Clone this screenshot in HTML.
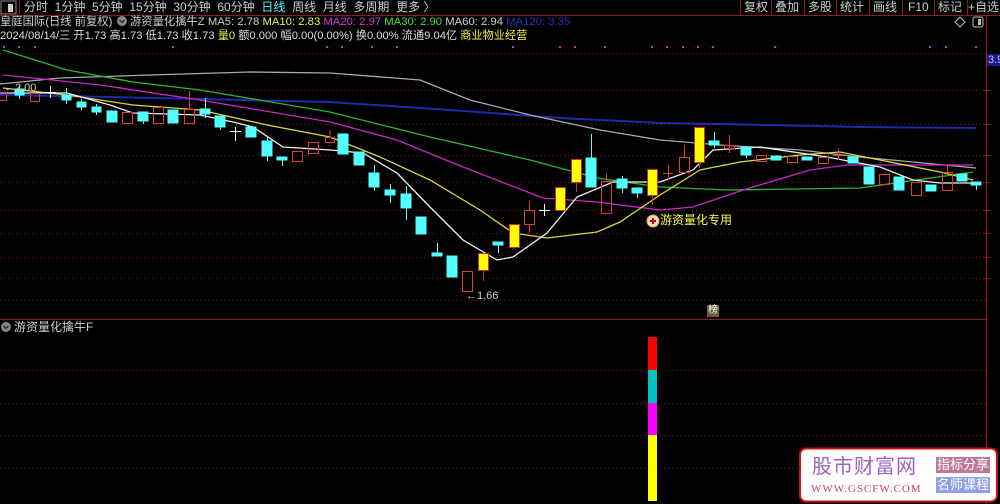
<!DOCTYPE html>
<html><head><meta charset="utf-8"><style>
body{margin:0;background:#000;width:1000px;height:504px;overflow:hidden;position:relative;font-family:"Liberation Sans","Noto Sans CJK SC",sans-serif;}
.t{position:absolute;white-space:nowrap;font-size:12px;line-height:14px;}
</style></head><body>
<svg width="1000" height="504" style="position:absolute;left:0;top:0" xmlns="http://www.w3.org/2000/svg">
<line x1="0" y1="15.5" x2="1000" y2="15.5" stroke="#8a1c1c"/>
<rect x="1" y="1" width="15" height="13" fill="none" stroke="#888"/>
<rect x="8" y="4" width="5" height="8" fill="#ccc"/>
<line x1="19.5" y1="0" x2="19.5" y2="15" stroke="#8a1c1c"/>
<g stroke="#8a1c1c"><line x1="740.5" y1="0" x2="740.5" y2="15"/><line x1="771.5" y1="0" x2="771.5" y2="15"/><line x1="804.5" y1="0" x2="804.5" y2="15"/><line x1="836.5" y1="0" x2="836.5" y2="15"/><line x1="869.5" y1="0" x2="869.5" y2="15"/><line x1="902.5" y1="0" x2="902.5" y2="15"/><line x1="934.5" y1="0" x2="934.5" y2="15"/><line x1="967.5" y1="0" x2="967.5" y2="15"/></g>
<line x1="986.5" y1="15" x2="986.5" y2="504" stroke="#a01c1c"/>
<g stroke="#a01c1c"><line x1="983" y1="90.5" x2="990" y2="90.5"/><line x1="983" y1="124.5" x2="990" y2="124.5"/><line x1="983" y1="155.5" x2="990" y2="155.5"/><line x1="983" y1="182.5" x2="990" y2="182.5"/><line x1="983" y1="210.5" x2="990" y2="210.5"/><line x1="983" y1="233.5" x2="990" y2="233.5"/><line x1="983" y1="257.5" x2="990" y2="257.5"/><line x1="983" y1="278.5" x2="990" y2="278.5"/></g>
<rect x="987" y="54" width="13" height="12" fill="#1a1a8a"/>
<path d="M960 17 L965 22 L960 27 L955 22Z" fill="none" stroke="#bbb"/>
<rect x="973" y="17" width="10" height="10" rx="2" fill="none" stroke="#bbb"/><rect x="978" y="19" width="3" height="6" fill="#bbb"/>
<g stroke="#6a1a1a" stroke-dasharray="1 3">
<line x1="0" y1="53.5" x2="986" y2="53.5"/><line x1="0" y1="90.5" x2="986" y2="90.5"/><line x1="0" y1="124.5" x2="986" y2="124.5"/><line x1="0" y1="155.5" x2="986" y2="155.5"/><line x1="0" y1="182.5" x2="986" y2="182.5"/><line x1="0" y1="210.5" x2="986" y2="210.5"/><line x1="0" y1="233.5" x2="986" y2="233.5"/><line x1="0" y1="257.5" x2="986" y2="257.5"/><line x1="0" y1="278.5" x2="986" y2="278.5"/><line x1="0" y1="300.5" x2="986" y2="300.5"/>
<line x1="0" y1="370.5" x2="986" y2="370.5"/><line x1="0" y1="403.5" x2="986" y2="403.5"/><line x1="0" y1="435.5" x2="986" y2="435.5"/><line x1="0" y1="468.5" x2="986" y2="468.5"/>
</g>
<line x1="0" y1="319.5" x2="986" y2="319.5" stroke="#8a1c1c"/>
<g fill="#e020e0"><rect x="3" y="46" width="2" height="2"/><rect x="18" y="46" width="2" height="2"/><rect x="34" y="46" width="2" height="2"/><rect x="172" y="46" width="2" height="2"/><rect x="326" y="46" width="2" height="2"/><rect x="341" y="46" width="2" height="2"/><rect x="371" y="46" width="2" height="2"/><rect x="396" y="46" width="2" height="2"/><rect x="512" y="46" width="2" height="2"/><rect x="559" y="46" width="2" height="2"/><rect x="574" y="46" width="2" height="2"/><rect x="604" y="46" width="2" height="2"/><rect x="651" y="46" width="2" height="2"/><rect x="666" y="46" width="2" height="2"/><rect x="682" y="46" width="2" height="2"/><rect x="697" y="46" width="2" height="2"/><rect x="712" y="46" width="2" height="2"/><rect x="774" y="46" width="2" height="2"/><rect x="929" y="46" width="2" height="2"/><rect x="945" y="46" width="2" height="2"/><rect x="975" y="46" width="2" height="2"/></g>
<g fill="none" stroke-width="1.3">
<polyline stroke="#1e2aa8" stroke-width="2" points="0,95 110,97 330,102 450,110 560,118 660,123 720,124 860,127 976,128"/>
<polyline stroke="#aaa" points="0,84 60,78 150,75 250,72 330,73 420,80 470,100 530,115 600,130 660,140 720,145 800,150 860,157 976,168"/>
<polyline stroke="#2cb82c" points="3,50 67,70 133,82 200,90 330,112 430,137 530,160 597,178 660,187 727,190 860,188 973,172"/>
<polyline stroke="#c828c8" points="3,75 100,85 200,100 330,122 397,140 463,167 543,198 597,202 660,210 693,207 743,190 810,170 847,165 973,165"/>
<polyline stroke="#d8d838" points="3,88 67,95 133,105 200,110 267,125 330,137 380,157 430,180 480,210 513,233 547,238 597,232 620,222 660,195 700,170 740,162 800,155 840,152 880,160 940,172 973,180"/>
<polyline stroke="#eee" points="0,93 67,93 110,105 133,113 200,115 233,122 253,127 283,147 330,150 363,153 397,173 430,207 463,240 497,260 513,257 547,233 577,197 613,182 660,182 693,170 713,150 760,147 827,157 880,167 913,180 940,183 973,183"/>
</g>
<g stroke-width="1">
<g stroke="#54ffff" fill="#54ffff">
<rect x="15" y="89" width="9" height="6"/><line x1="19.5" y1="85" x2="19.5" y2="99"/>
<line x1="66.5" y1="88" x2="66.5" y2="104"/><rect x="62" y="95" width="9" height="5"/>
<line x1="81.5" y1="99" x2="81.5" y2="110"/><rect x="77" y="102" width="9" height="5"/>
<line x1="96.5" y1="104" x2="96.5" y2="115"/><rect x="92" y="107" width="9" height="5"/>
<rect x="107" y="111" width="10" height="11"/>
<rect x="138" y="112" width="10" height="9"/><line x1="143.5" y1="121" x2="143.5" y2="124"/>
<rect x="168" y="110" width="10" height="13"/>
<line x1="205.5" y1="98" x2="205.5" y2="118"/><rect x="200" y="109" width="10" height="5"/>
<rect x="215" y="116" width="10" height="11"/><line x1="220.5" y1="127" x2="220.5" y2="130"/>
<rect x="246" y="127" width="10" height="10"/>
<rect x="262" y="141" width="10" height="15"/><line x1="267.5" y1="136" x2="267.5" y2="161"/>
<rect x="277" y="157" width="10" height="3"/><line x1="282.5" y1="160" x2="282.5" y2="166"/>
<rect x="338" y="134" width="10" height="20"/>
<rect x="354" y="152" width="10" height="13"/>
<rect x="369" y="173" width="10" height="14"/><line x1="374.5" y1="165" x2="374.5" y2="191"/>
<rect x="385" y="190" width="10" height="5"/><line x1="390.5" y1="184" x2="390.5" y2="203"/>
<rect x="401" y="194" width="10" height="14"/><line x1="406.5" y1="186" x2="406.5" y2="220"/>
<rect x="416" y="217" width="10" height="17"/>
<rect x="432" y="253" width="10" height="3"/><line x1="437.5" y1="243" x2="437.5" y2="253"/>
<rect x="447" y="256" width="10" height="21"/>
<rect x="493" y="242" width="10" height="3"/><line x1="498.5" y1="245" x2="498.5" y2="253"/>
<rect x="586" y="158" width="10" height="29"/><line x1="591.5" y1="134" x2="591.5" y2="158"/>
<rect x="617" y="179" width="10" height="9"/><line x1="622.5" y1="176" x2="622.5" y2="193"/>
<rect x="632" y="188" width="10" height="5"/><line x1="637.5" y1="193" x2="637.5" y2="198"/>
<rect x="709" y="141" width="10" height="4"/><line x1="714.5" y1="132" x2="714.5" y2="148"/>
<rect x="741" y="147" width="10" height="8"/><line x1="746.5" y1="155" x2="746.5" y2="158"/>
<rect x="771" y="156" width="10" height="4"/>
<rect x="802" y="157" width="10" height="3"/>
<rect x="848" y="157" width="10" height="6"/>
<rect x="864" y="167" width="10" height="17"/>
<rect x="894" y="177" width="10" height="13"/>
<rect x="926" y="185" width="10" height="6"/>
<rect x="957" y="174" width="10" height="7"/>
<rect x="971" y="182" width="10" height="3"/><line x1="976.5" y1="185" x2="976.5" y2="190"/>
</g>
<g stroke="#e03c3c" fill="none">
<rect x="-2.5" y="92.5" width="9" height="8"/>
<rect x="30.5" y="93.5" width="9" height="8"/>
<rect x="122.5" y="112.5" width="10" height="11"/>
<rect x="153.5" y="107.5" width="10" height="16"/>
<rect x="184.5" y="109.5" width="10" height="14"/><line x1="189.5" y1="91" x2="189.5" y2="109"/>
<rect x="292.5" y="151.5" width="10" height="10"/>
<rect x="308.5" y="142.5" width="10" height="11"/>
<rect x="325.5" y="137.5" width="9" height="5"/><line x1="330" y1="130" x2="330" y2="137"/>
<rect x="462.5" y="271.5" width="10" height="20"/>
<rect x="524.5" y="210.5" width="10" height="14"/><line x1="529.5" y1="201" x2="529.5" y2="210"/><line x1="529.5" y1="225" x2="529.5" y2="233"/>
<rect x="601.5" y="181.5" width="10" height="32"/><line x1="606.5" y1="173" x2="606.5" y2="181"/>
<line x1="663" y1="173.5" x2="673" y2="173.5"/><line x1="668.5" y1="165" x2="668.5" y2="180"/>
<rect x="679.5" y="157.5" width="10" height="15"/><line x1="684.5" y1="145" x2="684.5" y2="157"/>
<rect x="724.5" y="145.5" width="10" height="3"/><line x1="729.5" y1="135" x2="729.5" y2="153"/>
<rect x="756.5" y="155.5" width="10" height="6"/>
<rect x="787.5" y="156.5" width="10" height="6"/>
<rect x="818.5" y="157.5" width="10" height="6"/>
<line x1="833" y1="155.5" x2="843" y2="155.5"/><line x1="838.5" y1="148" x2="838.5" y2="160"/>
<rect x="879.5" y="174.5" width="10" height="10"/>
<rect x="911.5" y="182.5" width="10" height="13"/>
<rect x="942.5" y="172.5" width="10" height="18"/><line x1="947.5" y1="166" x2="947.5" y2="172"/>
</g>
<g fill="#ffff00" stroke="#c03030">
<rect x="478.5" y="253.5" width="10" height="17"/>
<rect x="509.5" y="224.5" width="10" height="23"/>
<rect x="555.5" y="187.5" width="10" height="23"/>
<rect x="571.5" y="159.5" width="10" height="23"/>
<rect x="647.5" y="169.5" width="10" height="26"/>
<rect x="694.5" y="127.5" width="10" height="35"/>
</g>
<g stroke="#c03030"><line x1="483.5" y1="271" x2="483.5" y2="281"/><line x1="576.5" y1="183" x2="576.5" y2="192"/><line x1="652.5" y1="196" x2="652.5" y2="205"/><line x1="699.5" y1="163" x2="699.5" y2="168"/></g>
<g stroke="#fff"><line x1="230" y1="131.5" x2="241" y2="131.5"/><line x1="235.5" y1="127" x2="235.5" y2="141"/><line x1="539" y1="210.5" x2="550" y2="210.5"/><line x1="544.5" y1="204" x2="544.5" y2="216"/><line x1="45" y1="92.5" x2="56" y2="92.5"/><line x1="50.5" y1="86" x2="50.5" y2="98"/></g>
</g>
<circle cx="653" cy="221" r="6" fill="#ddd" stroke="#fa0"/><path d="M650 221h6M653 218v6" stroke="#d00" stroke-width="2"/>
<rect x="648" y="337" width="9" height="33" fill="#ff0000"/>
<rect x="648" y="370" width="9" height="33" fill="#00c0c0"/>
<rect x="648" y="403" width="9" height="32" fill="#ff00ff"/>
<rect x="648" y="435" width="9" height="66" fill="#ffff00"/>
<circle cx="6" cy="327" r="5" fill="#888"/><path d="M3.5 326l2.5 2.5 2.5-2.5" stroke="#222" stroke-width="1.3" fill="none"/>
<circle cx="122" cy="21" r="5" fill="#888"/><path d="M119.5 20l2.5 2.5 2.5-2.5" stroke="#222" stroke-width="1.3" fill="none"/>
<rect x="707" y="305" width="12" height="12" fill="#6a5a3a"/>
<rect x="800" y="448.5" width="197" height="53" rx="6" fill="#fff" stroke="#d01010" stroke-width="2"/>
<rect x="936" y="457" width="54" height="16" fill="#c07898"/>
<rect x="936" y="477" width="54" height="16" fill="#90a0e8"/>
</svg>
<div class="t" style="left:24px;top:0;color:#ccc">分时&nbsp;&nbsp;1分钟&nbsp;&nbsp;5分钟&nbsp;&nbsp;15分钟&nbsp;&nbsp;30分钟&nbsp;&nbsp;60分钟&nbsp;&nbsp;<span style="color:#4ff">日线</span>&nbsp;&nbsp;周线&nbsp;&nbsp;月线&nbsp;&nbsp;多周期&nbsp;&nbsp;更多 〉</div>
<div class="t" style="left:744px;top:0;color:#ccc">复权</div>
<div class="t" style="left:775px;top:0;color:#ccc">叠加</div>
<div class="t" style="left:808px;top:0;color:#ccc">多股</div>
<div class="t" style="left:840px;top:0;color:#ccc">统计</div>
<div class="t" style="left:873px;top:0;color:#ccc">画线</div>
<div class="t" style="left:908px;top:0;color:#ccc">F10</div>
<div class="t" style="left:938px;top:0;color:#ccc">标记</div>
<div class="t" style="left:968px;top:0;color:#ccc">+自选</div>
<div class="t" style="left:0;top:15px;color:#ccc;font-size:11.3px">皇庭国际(日线 前复权)</div>
<div class="t" style="left:130px;top:15px;color:#ccc;font-size:11.3px">游资量化擒牛Z&nbsp;MA5: 2.78 <span style="color:#ee4">MA10: 2.83</span> <span style="color:#d3d">MA20: 2.97</span> <span style="color:#4d4">MA30: 2.90</span> MA60: 2.94 <span style="color:#2530c0">MA120: 3.35</span></div>
<div class="t" style="left:0;top:29px;color:#ddd;font-size:11.2px">2024/08/14/三 开1.73 高1.73 低1.73 收1.73 <span style="color:#ee4">量0</span> 额0.000 幅0.00(0.00%) 换0.00% 流通9.04亿 <span style="color:#ee4">商业物业经营</span></div>
<div class="t" style="left:988px;top:53px;color:#bbf;font-size:11px">3.9</div>
<div class="t" style="left:4px;top:81px;color:#ccc;font-size:11px">←2.00</div>
<div class="t" style="left:466px;top:289px;color:#ccc;font-size:11px">←1.66</div>
<div class="t" style="left:660px;top:213px;color:#ff4">游资量化专用</div>
<div class="t" style="left:708px;top:304px;color:#fff;font-size:10px">榜</div>
<div class="t" style="left:14px;top:320px;color:#ccc">游资量化擒牛F</div>
<div class="t" style="left:812px;top:455px;color:#a060c0;font-size:20px;line-height:24px;letter-spacing:1px">股市财富网</div>
<div class="t" style="left:811px;top:482px;color:#d04060;font-size:11px;font-family:'Liberation Serif',serif;letter-spacing:1px">WWW.GSCFW.COM</div>
<div class="t" style="left:937px;top:458px;color:#fff;font-size:13px">指标分享</div>
<div class="t" style="left:937px;top:478px;color:#fff;font-size:13px">名师课程</div>
</body></html>
